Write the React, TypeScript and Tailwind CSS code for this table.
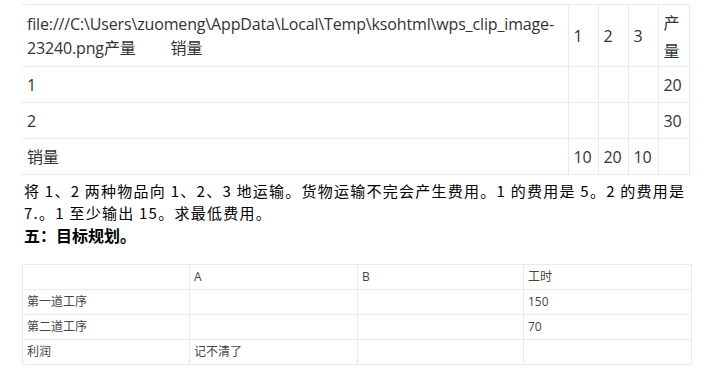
import React from 'react';

const sans = 'font-["Open_Sans","Noto_Sans_CJK_SC",sans-serif]';

const topRows = [
    { label: '1', cells: ['', '', '', '20'] },
    { label: '2', cells: ['', '', '', '30'] },
    { label: '销量', cells: ['10', '20', '10', ''] },
];

const bottomRows = [
    ['', 'A', 'B', '工时'],
    ['第一道工序', '', '', '150'],
    ['第二道工序', '', '', '70'],
    ['利润', '记不清了', '', ''],
];

export default function App() {
    return (
        <div className="w-[714px] h-[377px] bg-white overflow-hidden pt-[4px] pl-[22px]">
            {/* transport table */}
            <table className={`border-collapse text-[16px] leading-[24px] text-[#333] tracking-[-0.15px] ${sans}`}>
                <tbody>
                    <tr className="h-[62px] border-t border-b border-[#e3ebf5]">
                        <td className="w-[546px] pl-[5px] pr-[8px] align-middle">
                            file:///C:\Users\zuomeng\AppData\Local\Temp\ksohtml\wps_clip_image-
                            <br />
                            23240.png产量<span className="inline-block w-[35px]" />销量
                        </td>
                        <td className="w-[30px] pl-[5px] border-l border-[#e3ebf5]">1</td>
                        <td className="w-[30px] pl-[5px] border-l border-[#e3ebf5]">2</td>
                        <td className="w-[30px] pl-[5px] border-l border-[#e3ebf5]">3</td>
                        <td className="w-[31px] pl-[5px] border-l border-r border-[#e3ebf5] leading-[28px] pt-[2px]">
                            产<br />量
                        </td>
                    </tr>
                    {topRows.map(row => (
                        <tr key={row.label} className="h-[36px] border-b border-[#e3ebf5]">
                            <td className="pl-[5px]">{row.label}</td>
                            {row.cells.map((c, i) => (
                                <td
                                    key={i}
                                    className={`pl-[5px] border-l border-[#e3ebf5] ${i === 3 ? 'border-r' : ''}`}
                                >
                                    {c}
                                </td>
                            ))}
                        </tr>
                    ))}
                </tbody>
            </table>

            {/* question text */}
            <div className='pl-[2px] pt-[5px] text-[15px] leading-[22px] text-black font-["Noto_Sans_CJK_SC",sans-serif] whitespace-nowrap'>
                <div className="tracking-[1.25px]">将 1、2 两种物品向 1、2、3 地运输。货物运输不完会产生费用。1 的费用是 5。2 的费用是</div>
                <div className="tracking-[1.25px]">7.。1 至少输出 15。求最低费用。</div>
                <div className="font-bold text-[16px]">五：目标规划。</div>
            </div>

            {/* goal programming table */}
            <table className={`mt-[18px] border-collapse text-[12px] leading-[16px] text-[#444] ${sans}`}>
                <tbody>
                    {bottomRows.map((row, r) => (
                        <tr key={r} className="h-[25px]">
                            {row.map((c, i) => (
                                <td
                                    key={i}
                                    className={`border border-[#e3ebf5] pl-[4px] align-middle ${i === 0 ? 'w-[167px]' : i === 1 ? 'w-[168px]' : i === 2 ? 'w-[166px]' : 'w-[168px]'}`}
                                >
                                    {c}
                                </td>
                            ))}
                        </tr>
                    ))}
                </tbody>
            </table>
        </div>
    );
}
